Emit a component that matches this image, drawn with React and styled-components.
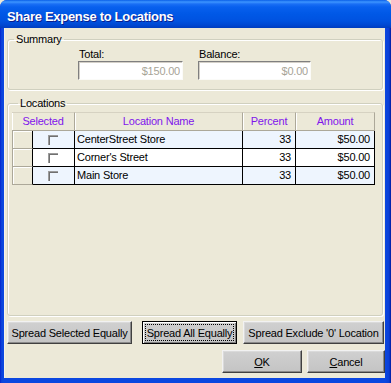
import React from 'react';
import styled, { createGlobalStyle } from 'styled-components';

const Global = createGlobalStyle`
  html, body { margin: 0; padding: 0; background: #ECE9D8; }
  body { width: 391px; height: 383px; overflow: hidden; font-family: "Liberation Sans", Arial, sans-serif; }
  * { box-sizing: border-box; }
`;

const Window = styled.div`
  width: 391px;
  height: 383px;
  display: flex;
  flex-direction: column;
  background: linear-gradient(to right, #0019CF 0, #0A3FD6 1px, #0B47E0 3px, #0B47E0 385px, #0A3FD6 389px, #001A9E 391px);
  border-radius: 7px 7px 0 0;
  overflow: hidden;
`;

const TitleBar = styled.div`
  height: 28px;
  flex: none;
  padding: 9px 0 0 7px;
  line-height: 15px;
  color: #fff;
  font: bold 13px/15px "Liberation Sans", Arial, sans-serif;
  letter-spacing: -0.3px;
  text-shadow: 1px 1px 0 #0A1E8C;
  background: linear-gradient(to bottom, #0A5FE8 0, #3D95FF 2px, #1A6FF5 4px, #0860EE 7px, #0058E6 14px, #0052E0 21px, #0048D2 25px, #003DBF 28px);
`;

const Client = styled.div`
  flex: 1;
  margin: 0 6px 5px 4px;
  background: #ECE9D8;
  box-shadow: inset 1px 0 0 #F4F2E8;
  display: flex;
  flex-direction: column;
  padding: 5px 0 0 3px;
  font-size: 11px;
  letter-spacing: -0.2px;
  color: #000;
`;

const Group = styled.fieldset`
  margin: ${p => p.$mt}px 0 0 0;
  padding: ${p => p.$pad};
  width: 376px;
  height: ${p => (p.$h ? `${p.$h}px` : 'auto')};
  min-width: 0;
  border: 1px solid #D0D0BF;
  border-radius: 3px;
  box-shadow: inset 1px 1px 0 #fff, 1px 1px 0 #fff;
`;

const Legend = styled.legend`
  margin-left: 6px;
  padding: 0 2px;
  font-size: 11px;
  line-height: 13px;
  color: #000;
`;

const FieldRow = styled.div`
  display: flex;
  gap: 15px;
  padding-left: 70px;
`;

const Field = styled.div`
  display: flex;
  flex-direction: column;
  width: ${p => p.$w}px;
`;

const Label = styled.span`
  line-height: 13px;
  margin-left: 1px;
`;

const Input = styled.input`
  height: 19px;
  width: 100%;
  margin: 0;
  padding: 0 2px 0 2px;
  text-align: right;
  font: 11px "Liberation Sans", Arial, sans-serif;
  letter-spacing: -0.2px;
  color: #A7A497;
  background: #fff;
  border: 1px solid;
  border-color: #7F7F7F #FBFBF8 #FBFBF8 #7F7F7F;
  box-shadow: inset 1px 1px 0 #D4D0C8;
  -webkit-text-fill-color: #A7A497;
  opacity: 1;
`;

const Grid = styled.div`
  width: 363px;
  display: flex;
  flex-direction: column;
`;

const cols = '21px 42px 168px 53px 79px';

const HeaderRow = styled.div`
  display: grid;
  grid-template-columns: ${cols};
  height: 19px;
`;

const HeadCell = styled.div`
  grid-column: span ${p => p.$span || 1};
  display: flex;
  align-items: center;
  justify-content: center;
  background: #ECE9D8;
  color: #7F14EC;
  border-right: 1px solid #ACA899;
  border-bottom: 1px solid #ACA899;
  border-top: 1px solid #D6D2C2;
  box-shadow: inset 1px 0 0 #fff;
  line-height: 13px;
`;

const DataRow = styled.div`
  display: grid;
  grid-template-columns: ${cols};
  height: 18px;
  background: ${p => (p.$alt ? '#fff' : '#EEF5FE')};
`;

const Selector = styled.div`
  background: #ECE9D8;
  border-left: 1px solid #ACA899;
  border-right: 1px solid #000;
  border-bottom: 1px solid #ACA899;
  box-shadow: inset 1px 1px 0 #fff;
`;

const Cell = styled.div`
  display: flex;
  align-items: center;
  justify-content: ${p => (p.$right ? 'flex-end' : p.$center ? 'center' : 'flex-start')};
  padding: 0 ${p => (p.$right ? '4px' : '2px')} 0 2px;
  border-right: 1px solid #000;
  border-bottom: 1px solid #000;
  line-height: 13px;
  white-space: nowrap;
`;

const Check = styled.span`
  width: 10px;
  height: 10px;
  margin-left: -1px;
  border-top: 1px solid #9C9C9C;
  border-left: 1px solid #9C9C9C;
  box-shadow: inset 1px 1px 0 #707070;
`;

const ButtonRow = styled.div`
  display: flex;
  gap: ${p => p.$gap || 0}px;
  margin-top: ${p => p.$mt}px;
  justify-content: ${p => (p.$end ? 'flex-end' : 'flex-start')};
`;

const Btn = styled.button`
  width: ${p => p.$w}px;
  height: 23px;
  margin: 0 0 0 ${p => p.$ml || 0}px;
  padding: 0;
  font: 11px "Liberation Sans", Arial, sans-serif;
  letter-spacing: -0.2px;
  color: #000;
  background: linear-gradient(to bottom, #D0D0D0, #C4C4C4);
  border: 1px solid;
  border-color: ${p => (p.$focus ? '#000' : '#F2F2F2 #404040 #404040 #F2F2F2')};
  box-shadow: ${p => (p.$focus ? 'inset 1px 1px 0 #fff, inset -1px -1px 0 #808080' : 'inset -1px -1px 0 #8A8A8A, inset 1px 1px 0 #DADADA')};
  outline: ${p => (p.$focus ? '1px dotted #000' : 'none')};
  outline-offset: -4px;
  cursor: default;
`;

const Key = styled.u`
  text-decoration: underline;
`;

const rows = [
  { name: 'CenterStreet Store', pct: 33, amt: '$50.00' },
  { name: "Corner's Street", pct: 33, amt: '$50.00' },
  { name: 'Main Store', pct: 33, amt: '$50.00' },
];

export default function App() {
  return (
    <>
      <Global />
      <Window>
        <TitleBar>Share Expense to Locations</TitleBar>
        <Client>
          <Group $mt={0} $pad="2px 0 9px 0">
            <Legend>Summary</Legend>
            <FieldRow>
              <Field $w={105}>
                <Label>Total:</Label>
                <Input readOnly disabled value="$150.00" />
              </Field>
              <Field $w={113}>
                <Label>Balance:</Label>
                <Input readOnly disabled value="$0.00" />
              </Field>
            </FieldRow>
          </Group>
          <Group $mt={7} $h={219} $pad="2px 0 0 4px">
            <Legend>Locations</Legend>
            <Grid>
              <HeaderRow>
                <HeadCell $span={2}>Selected</HeadCell>
                <HeadCell>Location Name</HeadCell>
                <HeadCell>Percent</HeadCell>
                <HeadCell>Amount</HeadCell>
              </HeaderRow>
              {rows.map((r, i) => (
                <DataRow key={r.name} $alt={i % 2 === 1}>
                  <Selector />
                  <Cell $center>
                    <Check />
                  </Cell>
                  <Cell>{r.name}</Cell>
                  <Cell $right>{r.pct}</Cell>
                  <Cell $right>{r.amt}</Cell>
                </DataRow>
              ))}
            </Grid>
          </Group>
          <ButtonRow $mt={5}>
            <Btn $w={125}>Spread Selected Equally</Btn>
            <Btn $w={95} $ml={10} $focus>Spread All Equally</Btn>
            <Btn $w={141} $ml={6}>Spread Exclude '0' Location</Btn>
          </ButtonRow>
          <ButtonRow $mt={6} $end $gap={5}>
            <Btn $w={80}><Key>O</Key>K</Btn>
            <Btn $w={78}><Key>C</Key>ancel</Btn>
          </ButtonRow>
        </Client>
      </Window>
    </>
  );
}
